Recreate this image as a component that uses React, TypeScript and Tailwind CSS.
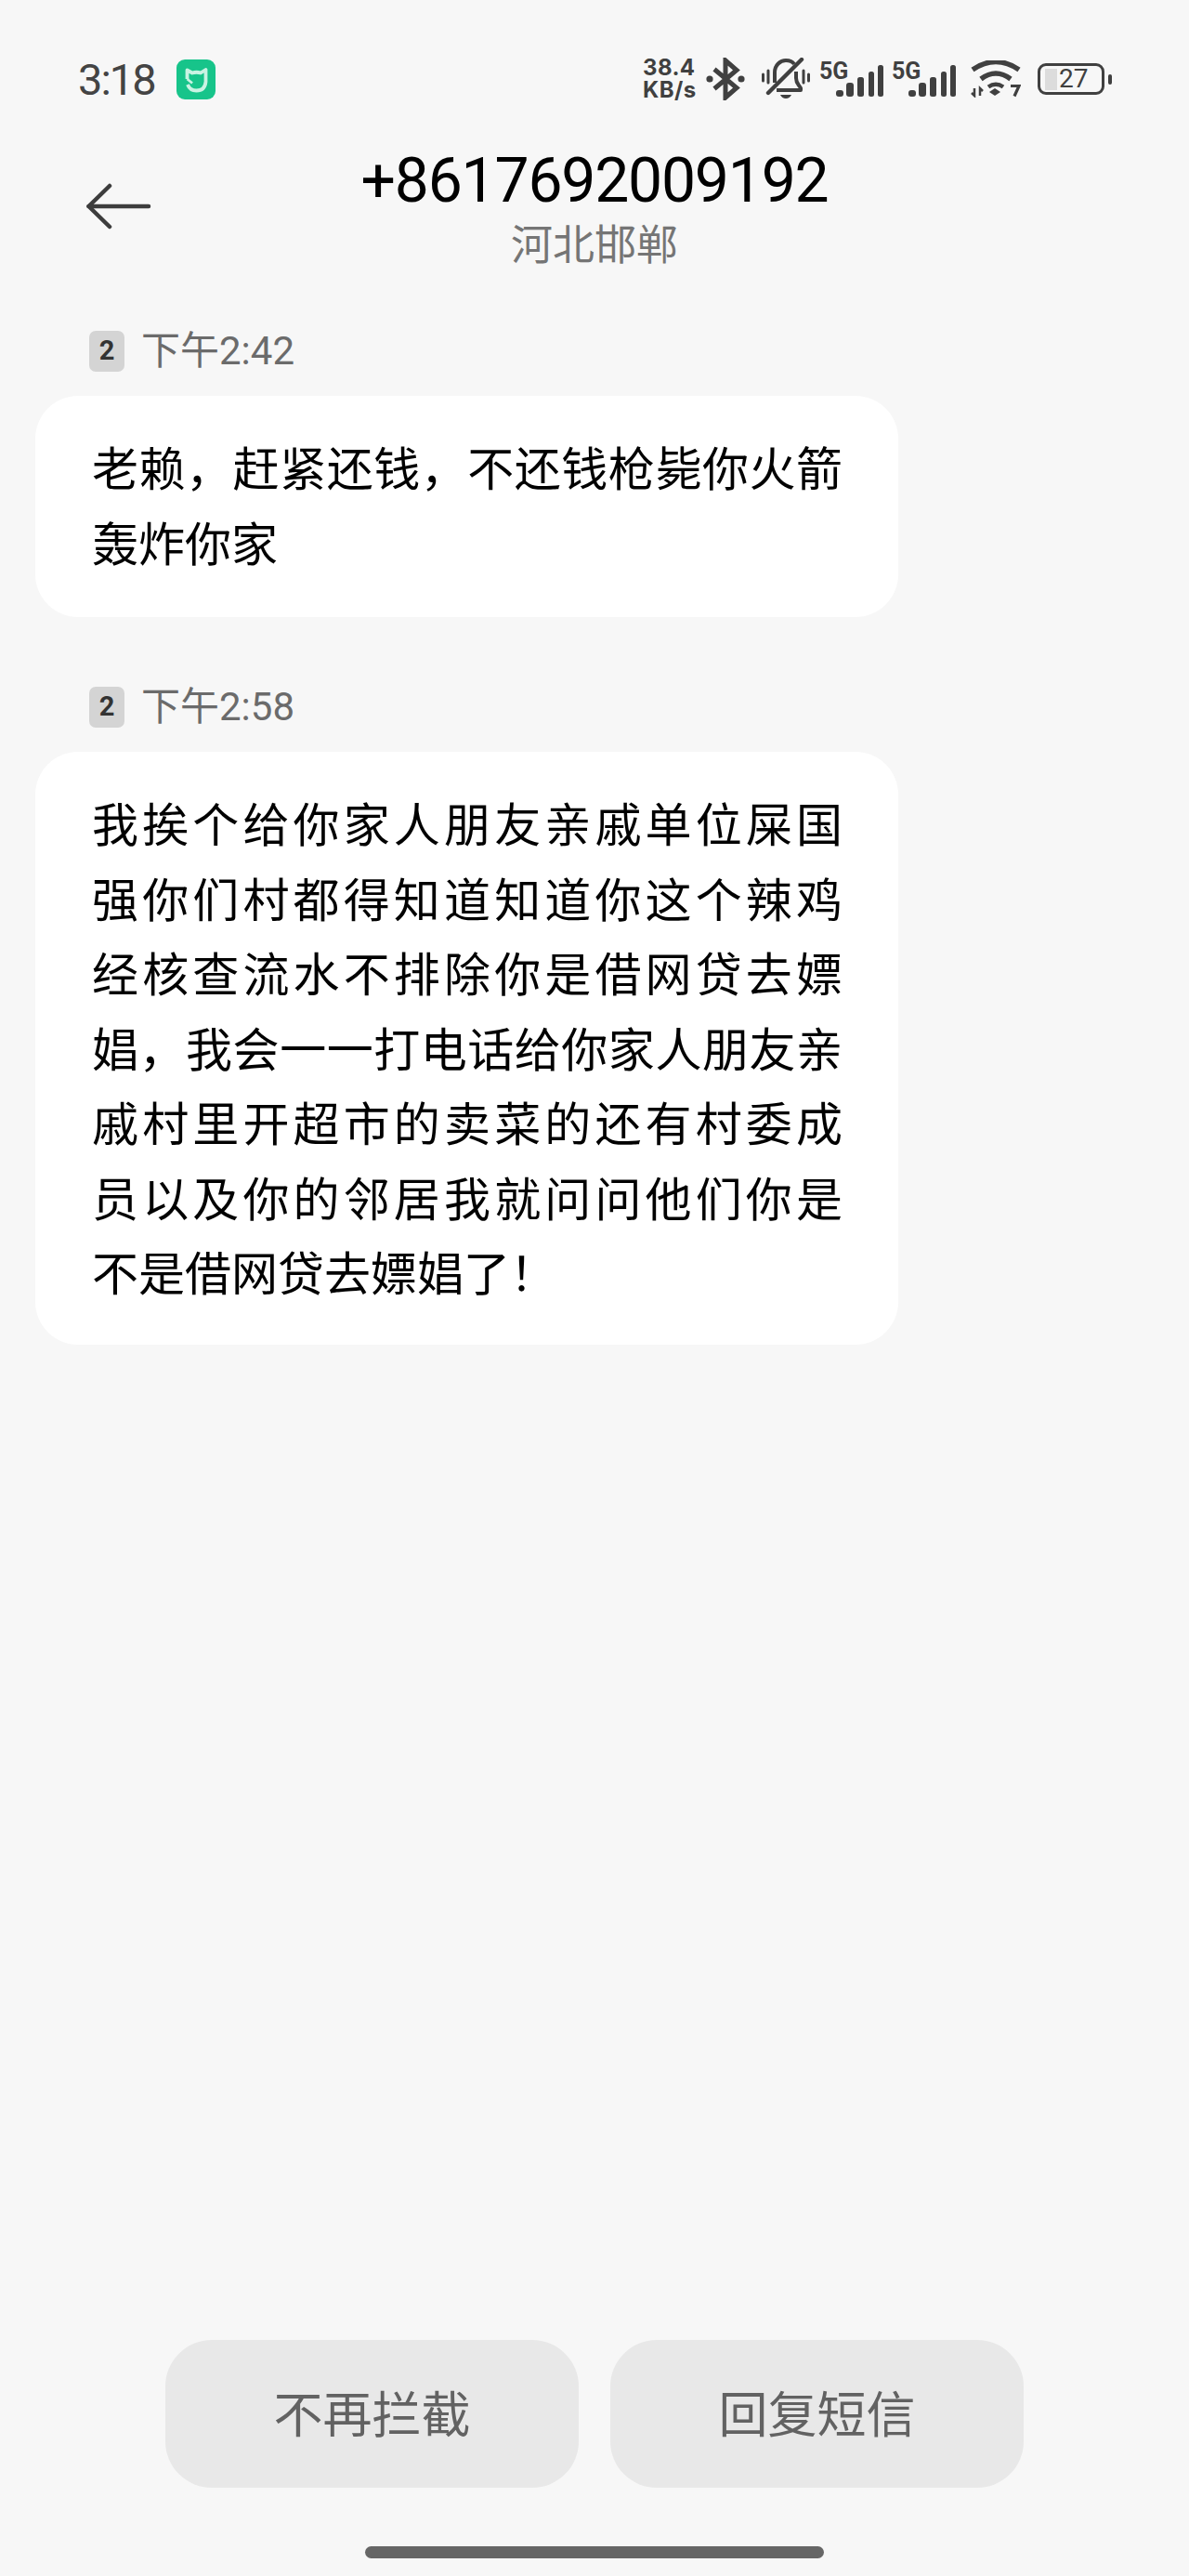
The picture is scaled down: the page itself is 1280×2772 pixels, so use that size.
import React from 'react';

const firstLines = ['老赖，赶紧还钱，不还钱枪毙你火箭'];
const firstLast = '轰炸你家';

const secondLines = [
  '我挨个给你家人朋友亲戚单位屎国',
  '强你们村都得知道知道你这个辣鸡',
  '经核查流水不排除你是借网贷去嫖',
  '娼，我会一一打电话给你家人朋友亲',
  '戚村里开超市的卖菜的还有村委成',
  '员以及你的邻居我就问问他们你是',
];
const secondLast = '不是借网贷去嫖娼了！';

const MiHomeIcon = () => (
  <svg width="42" height="43" viewBox="0 0 42 43">
    <rect width="42" height="43" rx="9" fill="#17c48a" />
    <path
      d="M11.500 21V11.500L17 14.500Q21.500 13 26 14.500L31.500 11V24Q30.500 33.500 21.500 33.500Q14.500 33.500 12 27"
      fill="none"
      stroke="#c9f3e3"
      strokeWidth="3.800"
      strokeLinejoin="round"
    />
    <path d="M11.500 21L17 25.500" fill="none" stroke="#c9f3e3" strokeWidth="2.800" />
  </svg>
);

const BluetoothIcon = () => (
  <svg width="42" height="46" viewBox="0 0 42 46" fill="none" stroke="#404040" strokeWidth="5">
    <path d="M9 12.500 33 32.500 21 43V3L33 13.500 9 33.500" strokeLinejoin="miter" />
    <circle cx="4" cy="23" r="3.600" fill="#404040" stroke="none" />
    <circle cx="38" cy="23" r="3.600" fill="#404040" stroke="none" />
  </svg>
);

const MuteBellIcon = () => (
  <svg width="52" height="46" viewBox="0 0 52 46" fill="none" stroke="#404040" strokeWidth="4">
    <path d="M14 27V16C14 8 20 3 26 3c4 0 7 1 9 4" />
    <path d="M37 15v7c0 6 3 7 5 11v2H16" strokeLinejoin="round" />
    <path d="M43 2 7 38" strokeWidth="4.400" strokeLinecap="round" />
    <path d="M20 40h12q-2 4-6 4t-6-4z" fill="#404040" stroke="none" />
    <path d="M1.500 18v7M7 14v13M45 14v13M50.500 18v7" strokeWidth="3" strokeLinecap="round" />
  </svg>
);

const SignalGroup = () => (
  <div className="flex items-start w-[70px] h-[38px]">
    <span className="text-[25px] leading-[22px] font-bold text-[#404040] font-['Roboto',sans-serif] w-[18px] whitespace-nowrap">
      5G
    </span>
    <svg width="52" height="34" viewBox="0 0 52 34" className="mt-[4px]" fill="#404040">
      <rect x="0" y="27" width="8" height="7" rx="3" />
      <rect x="11" y="19" width="8" height="15" rx="3" />
      <rect x="23" y="13" width="7" height="21" rx="2.500" />
      <rect x="35" y="7" width="6" height="27" rx="2.500" />
      <rect x="45" y="0" width="6" height="34" rx="2.500" />
    </svg>
  </div>
);

const WifiIcon = () => (
  <svg width="54" height="40" viewBox="0 0 54 40" fill="none" stroke="#404040" strokeWidth="5.500">
    <path d="M2 10Q27-7 52 10" />
    <path d="M11 20Q27 8 43 20" />
    <path d="M19 28.500Q27 23 35 28.500" strokeWidth="4.500" />
    <path d="M26 30l6 4-6 4-6-4z" fill="#404040" stroke="none" />
    <path d="M4 30v8L1 35M10 38v-8l3 3" strokeWidth="2.500" />
    <path d="M43 27.500h9l-5 11" strokeWidth="3.200" />
  </svg>
);

const Battery = () => (
  <div className="flex items-center gap-[4px]">
    <div className="flex h-[34px] w-[72px] items-center rounded-[9px] border-[3.5px] border-[#404040] pl-[5px]">
      <div className="h-[23px] w-[13px] bg-[#dcdcdc]" />
      <span className="ml-[2px] text-[28px] leading-none text-[#404040] font-['Roboto',sans-serif]">27</span>
    </div>
    <div className="h-[11px] w-[4px] rounded-full bg-[#404040]" />
  </div>
);

const MessageTime = ({ time }: { time: string }) => (
  <div className="flex items-center gap-[18px] pl-[58px]">
    <div className="flex h-[44px] w-[38px] items-center justify-center rounded-[7px] bg-[#d4d4d4] text-[29px] font-bold text-[#333] font-['Roboto',sans-serif]">
      2
    </div>
    <span className="text-[42px] leading-[44px] text-[#6b6b6b] font-['Roboto','Noto_Sans_CJK_SC',sans-serif]">
      {time}
    </span>
  </div>
);

const Bubble = ({ lines, last, className }: { lines: string[]; last: string; className: string }) => (
  <div className={`mt-[26px] rounded-[46px] bg-white pl-[61px] pr-[60px] pt-[35px] text-[50px] leading-[80.5px] text-black ${className}`}>
    {lines.map(line => (
      <div key={line} className="text-justify [text-align-last:justify] whitespace-nowrap">
        {line}
      </div>
    ))}
    <div>{last}</div>
  </div>
);

export default function App() {
  return (
    <div className="flex h-[2772px] w-[1280px] flex-col overflow-hidden bg-[#f7f7f7] font-['Noto_Sans_CJK_SC',sans-serif]">
      {/* status bar */}
      <div className="flex h-[44px] mt-[63px] items-center justify-between pl-[84px] pr-[83px]">
        <div className="flex items-center gap-[23px]">
          <span className="text-[47px] leading-none tracking-[-2px] font-[450] text-[#444] font-['Roboto',sans-serif]">3:18</span>
          <MiHomeIcon />
        </div>
        <div className="flex items-center">
          <div className="w-[68px] text-[24px] leading-[24px] tracking-[0.4px] font-bold text-[#404040] font-['Inter',sans-serif]">
            <div>38.4</div>
            <div>KB/s</div>
          </div>
          <div><BluetoothIcon /></div>
          <div className="ml-[18px]"><MuteBellIcon /></div>
          <div className="ml-[10px]"><SignalGroup /></div>
          <div className="ml-[8px]"><SignalGroup /></div>
          <div className="ml-[15px]"><WifiIcon /></div>
          <div className="ml-[18px]"><Battery /></div>
        </div>
      </div>

      {/* header */}
      <div className="mt-[48px] grid grid-cols-[1fr_auto_1fr] items-start">
        <div className="pl-[93px] pt-[42px]">
          <svg width="70" height="50" viewBox="0 0 70 50" fill="none" stroke="#3d3d3d" strokeWidth="4.500" strokeLinecap="round" strokeLinejoin="round">
            <path d="M25 3 2.500 25 25 47" />
            <path d="M2.500 25H67" />
          </svg>
        </div>
        <div className="flex flex-col items-center">
          <div className="text-[66px] leading-[80px] tracking-[-1.2px] font-[450] text-black font-['Roboto',sans-serif]">+8617692009192</div>
          <div className="text-[45px] leading-[52px] text-[#757575]">河北邯郸</div>
        </div>
        <div />
      </div>

      {/* messages */}
      <div className="mt-[69px] flex flex-col px-[38px] w-[1005px]">
        <MessageTime time="下午2:42" />
        <Bubble lines={firstLines} last={firstLast} className="pb-[42px]" />
        <div className="h-[75px]" />
        <MessageTime time="下午2:58" />
        <Bubble lines={secondLines} last={secondLast} className="pb-[39px]" />
      </div>

      {/* buttons */}
      <div className="mt-auto flex justify-center gap-[34px]">
        <button className="flex h-[159px] w-[445px] items-center justify-center rounded-[50px] bg-[#e8e8e8] pb-[4px] text-[53px] text-[#626262]">
          不再拦截
        </button>
        <button className="flex h-[159px] w-[445px] items-center justify-center rounded-[50px] bg-[#e8e8e8] pb-[4px] text-[53px] text-[#626262]">
          回复短信
        </button>
      </div>
      <div className="mb-[19px] mt-[63px] flex justify-center">
        <div className="h-[13px] w-[494px] rounded-full bg-[#666]" />
      </div>
    </div>
  );
}
